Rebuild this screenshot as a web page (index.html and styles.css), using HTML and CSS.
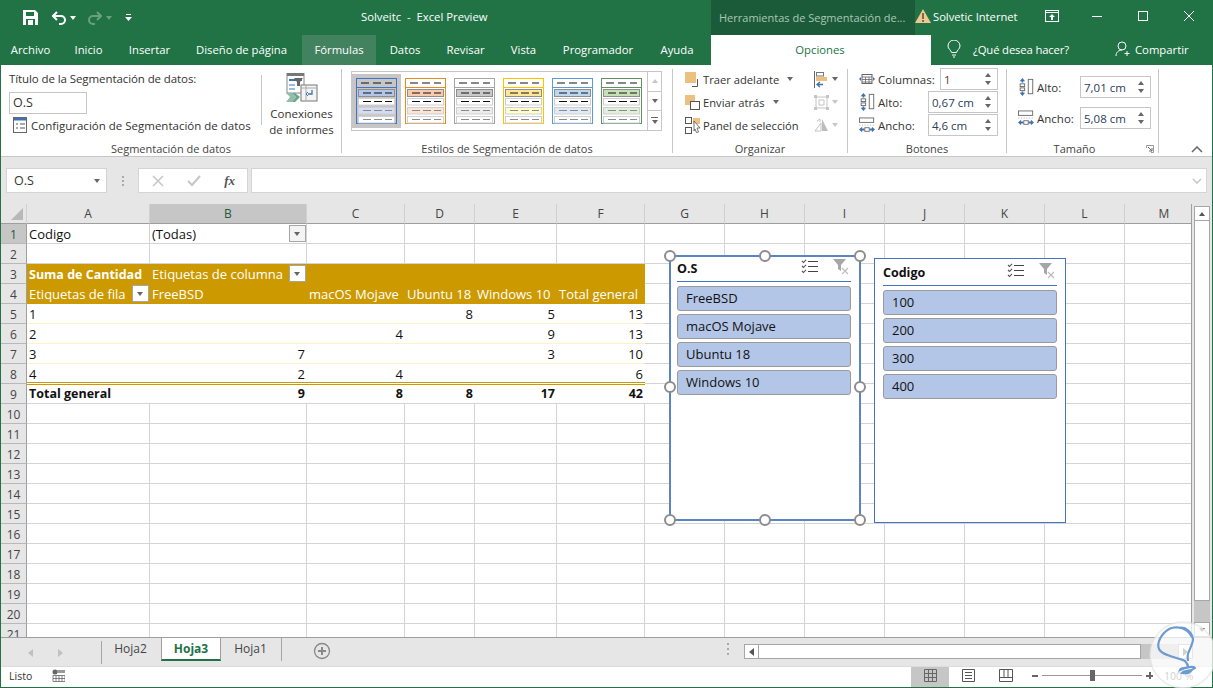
FILE: index.html
```html
<!DOCTYPE html>
<html lang="es">
<head>
<meta charset="utf-8">
<title>Solveitc - Excel Preview</title>
<link rel="stylesheet" href="styles.css">
</head>
<body>
<svg class="defs" width="0" height="0" aria-hidden="true">
  <symbol id="swatch" viewBox="0 0 41 46">
    <rect class="sw-frame" x=".5" y=".5" width="40" height="45"/>
    <path class="sw-frame" d="M0 9.5H41"/>
    <path class="sw-dark" d="M5 5h8M17 5h8M29 5h7"/>
    <rect class="sw-i1" x="2.5" y="11.5" width="36" height="7"/>
    <path class="sw-dark" d="M7 15h8M18 15h8M29 15h7"/>
    <rect class="sw-plain" x="2.5" y="20.5" width="36" height="6.5"/>
    <path class="sw-dark" d="M7 23.5h8M18 23.5h8M29 23.5h7"/>
    <rect class="sw-i2" x="2.5" y="29.5" width="36" height="6.5"/>
    <path class="sw-mid" d="M7 32.5h8M18 32.5h8M29 32.5h7"/>
    <rect class="sw-plain" x="2.5" y="38.5" width="36" height="6.5"/>
    <path class="sw-mid" d="M7 41.5h8M18 41.5h8M29 41.5h7"/>
  </symbol>
  <symbol id="multi" viewBox="0 0 18 16">
    <path d="M7 2.5h10M7 7.5h10M7 12.5h10" fill="none" stroke="#444" stroke-width="1"/>
    <path d="M1 2l1.5 1.5L5 .8M1 7l1.5 1.5L5 5.8M1 12l1.5 1.5L5 10.8" fill="none" stroke="#555" stroke-width="1.1"/>
  </symbol>
  <symbol id="clear" viewBox="0 0 16 16">
    <path d="M0 0h13L8 6v6L5 10V6z" fill="#a6a6a6"/>
    <path d="M9 9l6 6M15 9l-6 6" stroke="#bdbdbd" stroke-width="1.2"/>
  </symbol>
  <symbol id="height" viewBox="0 0 16 20">
    <path d="M4 0l3 3.5H1zM4 20l3-3.5H1z" fill="#3f72af"/>
    <path d="M4 3v2M4 15v2" stroke="#3f72af" stroke-width="2"/>
    <rect x="1.5" y="6.5" width="5" height="3" fill="none" stroke="#666"/>
    <rect x="1.5" y="11" width="5" height="3" fill="none" stroke="#666"/>
    <rect x="10.5" y="1.5" width="5" height="16" fill="#fff" stroke="#666"/>
  </symbol>
  <symbol id="width" viewBox="0 0 18 18">
    <rect x=".5" y=".5" width="16" height="5" fill="#fff" stroke="#666"/>
    <path d="M1 8v1M4 8v1M7 8v1M10 8v1M13 8v1M16 8v1" stroke="#999"/>
    <path d="M0 13.5l3.5-3v6zM18 13.5l-3.5-3v6z" fill="#3f72af"/>
    <path d="M3 13.5h3M12 13.5h3" stroke="#3f72af" stroke-width="2"/>
    <rect x="6.5" y="11.5" width="5" height="4" fill="none" stroke="#666"/>
  </symbol>
</svg>

<div class="app">
  <header class="titlebar">
    <div class="qat">
      <svg class="ic-save" width="15" height="15" viewBox="0 0 15 15"><path d="M0 0h12l3 3v12H0z" fill="#fff"/><rect x="3" y="2" width="8" height="4" fill="#217346"/><rect x="3" y="9" width="9" height="6" fill="#217346"/><rect x="5" y="10" width="5" height="5" fill="#fff"/></svg>
      <svg class="ic-undo" width="15" height="14" viewBox="0 0 15 14"><path d="M5 1L1 5l4 4" fill="none" stroke="#fff" stroke-width="2"/><path d="M1 5h8a4 4 0 0 1 0 8H7" fill="none" stroke="#fff" stroke-width="2"/></svg>
      <i class="caret caret-w"></i>
      <svg class="ic-redo" width="15" height="14" viewBox="0 0 15 14"><path d="M10 1l4 4-4 4" fill="none" stroke="#6a9f80" stroke-width="2"/><path d="M14 5H6a4 4 0 0 0 0 8h2" fill="none" stroke="#6a9f80" stroke-width="2"/></svg>
      <i class="caret caret-dim"></i>
      <svg class="ic-custom" width="7" height="7" viewBox="0 0 7 7"><path d="M1 .5h5" stroke="#fff"/><path d="M0 3h7L3.5 7z" fill="#fff"/></svg>
    </div>
    <div class="doc-title">Solveitc &nbsp;-&nbsp; Excel Preview</div>
    <div class="context-title">Herramientas de Segmentación de...</div>
    <svg class="ic-warn" width="16" height="14" viewBox="0 0 16 14"><path d="M8 0l8 14H0z" fill="#f0c78c"/><path d="M8 4v6M8 11v2" stroke="#444" stroke-width="1.4"/></svg>
    <div class="account">Solvetic Internet</div>
    <svg class="ic-ribbonopts" width="14" height="12" viewBox="0 0 14 12"><rect x=".5" y=".5" width="13" height="11" fill="none" stroke="#fff"/><path d="M0 2.5h14" stroke="#fff"/><path d="M7 4l3 3H8v3H6V7H4z" fill="#fff"/></svg>
    <svg class="ic-win ic-min" width="12" height="12" viewBox="0 0 12 12"><path d="M1 6.5h10" stroke="#fff"/></svg>
    <svg class="ic-win ic-max" width="12" height="12" viewBox="0 0 12 12"><rect x="1.5" y="1.5" width="9" height="9" fill="none" stroke="#fff"/></svg>
    <svg class="ic-win ic-close" width="12" height="12" viewBox="0 0 12 12"><path d="M1 1l10 10M11 1L1 11" stroke="#fff"/></svg>
  </header>

  <nav class="tabs">
    <span class="tab">Archivo</span>
    <span class="tab">Inicio</span>
    <span class="tab">Insertar</span>
    <span class="tab">Diseño de página</span>
    <span class="tab tab-hover">Fórmulas</span>
    <span class="tab">Datos</span>
    <span class="tab">Revisar</span>
    <span class="tab">Vista</span>
    <span class="tab">Programador</span>
    <span class="tab">Ayuda</span>
    <span class="tab tab-active">Opciones</span>
    <div class="tab-extra">
      <svg class="ic-bulb" width="14" height="18" viewBox="0 0 14 18"><path d="M4.5 12.5C4 10 1 9 1 6a6 6 0 0 1 12 0c0 3-3 4-3.500 6.500z M5 15h4M6 17h2" fill="none" stroke="#fff"/></svg>
      <span class="tell">¿Qué desea hacer?</span>
      <svg class="ic-share" width="16" height="16" viewBox="0 0 16 16"><circle cx="7" cy="5" r="4" fill="none" stroke="#fff"/><path d="M1 15c0-4 3-6 6-6M12 10v5M9.500 12.500h5" fill="none" stroke="#fff"/></svg>
      <span class="share">Compartir</span>
    </div>
  </nav>

  <div class="content">
    <section class="ribbon">
      <div class="group g-slicer">
        <div class="group-body g-slicer-body">
          <div class="slicer-title-col">
            <div class="rb-label">Título de la Segmentación de datos:</div>
            <div class="title-input">O.S</div>
            <div class="config-row">
              <svg width="14" height="16" viewBox="0 0 14 16"><rect x=".5" y=".5" width="13" height="15" fill="#fff" stroke="#666"/><rect x="1" y="1" width="12" height="2.500" fill="#3f72af"/><path d="M3 7h2M7 7h5M3 11h2M7 11h5" stroke="#555"/></svg>
              <span>Configuración de Segmentación de datos</span>
            </div>
          </div>
          <div class="inner-sep"></div>
          <div class="connections">
            <svg width="32" height="30" viewBox="0 0 32 30">
              <rect x="1" y="0" width="17" height="20" fill="#fff" stroke="#888"/><rect x="1" y="0" width="17" height="3" fill="#777"/>
              <rect x="3" y="6" width="13" height="2" fill="#3f72af"/><rect x="3" y="11" width="6" height="2" fill="#9cbbe0"/><rect x="3" y="15" width="6" height="2" fill="#9cbbe0"/>
              <path d="M8 5h9l-3 4v4h-3V9z" fill="#666"/>
              <rect x="15" y="12" width="16" height="16" fill="#f4f4f4" stroke="#777"/><path d="M15 15h16M20 12v16" stroke="#aaa"/>
              <path d="M26 17v4h-4" fill="none" stroke="#3f72af" stroke-width="1.300"/><path d="M22 19l-2 2 2 2" fill="none" stroke="#3f72af"/>
              <path d="M0 20h6l4 4-4 5H0l4-5z" fill="#8fbfa8"/><path d="M6 20h3l5 4-5 5H6l4-5z" fill="#6aa58a"/>
            </svg>
            <span class="conn-text">Conexiones<br>de informes</span>
          </div>
        </div>
        <div class="group-label">Segmentación de datos</div>
      </div>

      <div class="group g-styles">
        <div class="group-body g-styles-body">
          <div class="gallery">
            <div class="sw-slot sw-selected"><svg class="sw sw-blue"><use href="#swatch"/></svg></div>
            <div class="sw-slot"><svg class="sw sw-orange"><use href="#swatch"/></svg></div>
            <div class="sw-slot"><svg class="sw sw-gray"><use href="#swatch"/></svg></div>
            <div class="sw-slot"><svg class="sw sw-yellow"><use href="#swatch"/></svg></div>
            <div class="sw-slot"><svg class="sw sw-sky"><use href="#swatch"/></svg></div>
            <div class="sw-slot"><svg class="sw sw-green"><use href="#swatch"/></svg></div>
          </div>
          <div class="gal-scroll">
            <div class="gal-btn gal-up"><i class="tri-up tri-dim"></i></div>
            <div class="gal-btn gal-mid"><i class="caret"></i></div>
            <div class="gal-btn gal-more"><i class="more-bar"></i><i class="caret"></i></div>
          </div>
        </div>
        <div class="group-label">Estilos de Segmentación de datos</div>
      </div>

      <div class="group g-arrange">
        <div class="group-body g-arrange-body">
          <div class="arr-col">
            <div class="arr-row">
              <svg width="15" height="15" viewBox="0 0 15 15"><rect width="11" height="11" fill="#ecc07f"/><path d="M12.500 7v7.500H7" fill="none" stroke="#555"/></svg>
              <span>Traer adelante</span><i class="caret caret-far"></i>
            </div>
            <div class="arr-row">
              <svg width="15" height="15" viewBox="0 0 15 15"><rect width="10" height="10" fill="#ecc07f"/><rect x="5.500" y="6.500" width="9" height="8" fill="#fff" stroke="#555"/></svg>
              <span>Enviar atrás</span><i class="caret caret-far"></i>
            </div>
            <div class="arr-row">
              <svg class="arr-wide" width="16" height="17" viewBox="0 0 16 17"><rect x=".5" y=".5" width="6" height="6" fill="none" stroke="#555"/><rect x=".5" y="10.500" width="6" height="6" fill="none" stroke="#555"/><rect x="8" y="1" width="7" height="6" fill="#ecc07f"/><path d="M9 4l6 7-3 0 1.500 4-2 .5L10 12l-1 2z" fill="#fff" stroke="#555" stroke-width=".8"/></svg>
              <span>Panel de selección</span>
            </div>
          </div>
          <div class="arr-col arr-col-right">
            <div class="arr-row">
              <svg width="15" height="17" viewBox="0 0 15 17"><path d="M.5 0v17" stroke="#666"/><rect x="2.500" y="1.500" width="7" height="3.500" fill="#fff" stroke="#777"/><rect x="2" y="6" width="11" height="4" fill="#ecc07f"/><path d="M9 13.500H3M6 11l-3 2.500L6 16" fill="none" stroke="#3f72af" stroke-width="1.300"/></svg>
              <i class="caret"></i>
            </div>
            <div class="arr-row arr-off">
              <svg width="15" height="15" viewBox="0 0 15 15"><path d="M2 2h11v11H2z M5 5h5v5H5z" fill="none" stroke="#c4c4c4"/><path d="M0 0h3v3H0zM12 0h3v3h-3zM0 12h3v3H0zM12 12h3v3h-3z" fill="#c4c4c4"/></svg>
              <i class="caret caret-dim2"></i>
            </div>
            <div class="arr-row arr-off">
              <svg width="15" height="14" viewBox="0 0 15 14"><path d="M1 13l6-8v8z" fill="none" stroke="#c4c4c4"/><path d="M8 1l6 12H8z" fill="#bdbdbd"/><path d="M3 3l3-2v3" fill="none" stroke="#c4c4c4"/></svg>
              <i class="caret caret-dim2"></i>
            </div>
          </div>
        </div>
        <div class="group-label">Organizar</div>
      </div>

      <div class="group g-buttons">
        <div class="group-body g-buttons-body">
          <div class="size-row">
            <svg class="size-ic" width="16" height="10" viewBox="0 0 16 10"><rect x="3" y=".5" width="10" height="9" fill="#fff" stroke="#666"/><path d="M3 3h10M3 5.500h10M3 8h10M6.500 3v6M10 3v6" stroke="#666" stroke-width=".8"/><path d="M0 5l2-2v4zM16 5l-2-2v4z" fill="#3f72af"/></svg>
            <span class="size-label">Columnas:</span>
            <div class="spin spin-col"><span>1</span><div class="spin-arrows"><i class="tri-up"></i><i class="tri-down"></i></div></div>
          </div>
          <div class="size-row">
            <svg class="size-ic" width="16" height="18"><use href="#height"/></svg>
            <span class="size-label">Alto:</span>
            <div class="spin"><span>0,67 cm</span><div class="spin-arrows"><i class="tri-up"></i><i class="tri-down"></i></div></div>
          </div>
          <div class="size-row">
            <svg class="size-ic" width="16" height="17"><use href="#width"/></svg>
            <span class="size-label">Ancho:</span>
            <div class="spin"><span>4,6 cm</span><div class="spin-arrows"><i class="tri-up"></i><i class="tri-down"></i></div></div>
          </div>
        </div>
        <div class="group-label">Botones</div>
      </div>

      <div class="group g-size">
        <div class="group-body g-size-body">
          <div class="size-row">
            <svg class="size-ic" width="16" height="18"><use href="#height"/></svg>
            <span class="size-label">Alto:</span>
            <div class="spin spin-wide"><span>7,01 cm</span><div class="spin-arrows"><i class="tri-up"></i><i class="tri-down"></i></div></div>
          </div>
          <div class="size-row">
            <svg class="size-ic" width="16" height="17"><use href="#width"/></svg>
            <span class="size-label">Ancho:</span>
            <div class="spin spin-wide"><span>5,08 cm</span><div class="spin-arrows"><i class="tri-up"></i><i class="tri-down"></i></div></div>
          </div>
        </div>
        <div class="group-label size-group-label">Tamaño</div>
        <svg class="launcher" width="8" height="8" viewBox="0 0 8 8"><path d="M.5 3V.5H7.500V7.500H5" fill="none" stroke="#999"/><path d="M2 2l4 4M6 3v3H3" fill="none" stroke="#666"/></svg>
      </div>

      <div class="ribbon-end">
        <svg width="12" height="7" viewBox="0 0 12 7"><path d="M1 6l5-5 5 5" fill="none" stroke="#666" stroke-width="1.500"/></svg>
      </div>
    </section>

    <section class="formula">
      <div class="namebox"><span>O.S</span><i class="caret"></i></div>
      <div class="fx-dots"><i></i><i></i><i></i></div>
      <div class="fx-buttons">
        <svg width="12" height="12" viewBox="0 0 12 12"><path d="M1 1l10 10M11 1L1 11" stroke="#c6c6c6" stroke-width="1.500"/></svg>
        <svg width="14" height="12" viewBox="0 0 14 12"><path d="M1 6l4 4 8-9" fill="none" stroke="#c6c6c6" stroke-width="2"/></svg>
        <span class="fx">fx</span>
      </div>
      <div class="fx-input"><svg width="10" height="6" viewBox="0 0 10 6"><path d="M1 1l4 4 4-4" fill="none" stroke="#c6c6c6" stroke-width="1.500"/></svg></div>
    </section>

    <section class="sheet">
      <div class="grid">
        <table class="cells">
          <colgroup>
            <col class="c-h"><col class="c-a"><col class="c-b"><col class="c-c"><col class="c-d"><col class="c-e"><col class="c-f">
            <col class="c-n"><col class="c-n"><col class="c-n"><col class="c-n"><col class="c-n"><col class="c-n"><col class="c-m">
          </colgroup>
          <tr class="head"><th class="corner"><i></i></th><th>A</th><th class="sel">B</th><th>C</th><th>D</th><th>E</th><th>F</th><th>G</th><th>H</th><th>I</th><th>J</th><th>K</th><th>L</th><th class="col-m">M</th></tr>
          <tr><th class="sel">1</th><td>Codigo</td><td class="has-dd">(Todas)<i class="dd"></i></td><td></td><td></td><td></td><td></td><td></td><td></td><td></td><td></td><td></td><td></td><td></td></tr>
          <tr><th>2</th><td></td><td></td><td></td><td></td><td></td><td></td><td></td><td></td><td></td><td></td><td></td><td></td><td></td></tr>
          <tr class="pv-head"><th>3</th><td class="b">Suma de Cantidad</td><td class="has-dd">Etiquetas de columna<i class="dd"></i></td><td></td><td></td><td></td><td></td><td class="n"></td><td class="n"></td><td class="n"></td><td class="n"></td><td class="n"></td><td class="n"></td><td class="n"></td></tr>
          <tr class="pv-head"><th>4</th><td class="has-dd">Etiquetas de fila<i class="dd"></i></td><td>FreeBSD</td><td>macOS Mojave</td><td>Ubuntu 18</td><td>Windows 10</td><td>Total general</td><td class="n"></td><td class="n"></td><td class="n"></td><td class="n"></td><td class="n"></td><td class="n"></td><td class="n"></td></tr>
          <tr class="pv"><th>5</th><td>1</td><td></td><td></td><td class="r">8</td><td class="r">5</td><td class="r">13</td><td class="n"></td><td class="n"></td><td class="n"></td><td class="n"></td><td class="n"></td><td class="n"></td><td class="n"></td></tr>
          <tr class="pv"><th>6</th><td>2</td><td></td><td class="r">4</td><td></td><td class="r">9</td><td class="r">13</td><td class="n"></td><td class="n"></td><td class="n"></td><td class="n"></td><td class="n"></td><td class="n"></td><td class="n"></td></tr>
          <tr class="pv"><th>7</th><td>3</td><td class="r">7</td><td></td><td></td><td class="r">3</td><td class="r">10</td><td class="n"></td><td class="n"></td><td class="n"></td><td class="n"></td><td class="n"></td><td class="n"></td><td class="n"></td></tr>
          <tr class="pv pv-last"><th>8</th><td>4</td><td class="r">2</td><td class="r">4</td><td></td><td></td><td class="r">6</td><td class="n"></td><td class="n"></td><td class="n"></td><td class="n"></td><td class="n"></td><td class="n"></td><td class="n"></td></tr>
          <tr class="pv pv-total"><th>9</th><td>Total general</td><td class="r">9</td><td class="r">8</td><td class="r">8</td><td class="r">17</td><td class="r">42</td><td class="n"></td><td class="n"></td><td class="n"></td><td class="n"></td><td class="n"></td><td class="n"></td><td class="n"></td></tr>
          <tr><th>10</th><td></td><td></td><td></td><td></td><td></td><td></td><td></td><td></td><td></td><td></td><td></td><td></td><td></td></tr>
          <tr><th>11</th><td></td><td></td><td></td><td></td><td></td><td></td><td></td><td></td><td></td><td></td><td></td><td></td><td></td></tr>
          <tr><th>12</th><td></td><td></td><td></td><td></td><td></td><td></td><td></td><td></td><td></td><td></td><td></td><td></td><td></td></tr>
          <tr><th>13</th><td></td><td></td><td></td><td></td><td></td><td></td><td></td><td></td><td></td><td></td><td></td><td></td><td></td></tr>
          <tr><th>14</th><td></td><td></td><td></td><td></td><td></td><td></td><td></td><td></td><td></td><td></td><td></td><td></td><td></td></tr>
          <tr><th>15</th><td></td><td></td><td></td><td></td><td></td><td></td><td></td><td></td><td></td><td></td><td></td><td></td><td></td></tr>
          <tr><th>16</th><td></td><td></td><td></td><td></td><td></td><td></td><td></td><td></td><td></td><td></td><td></td><td></td><td></td></tr>
          <tr><th>17</th><td></td><td></td><td></td><td></td><td></td><td></td><td></td><td></td><td></td><td></td><td></td><td></td><td></td></tr>
          <tr><th>18</th><td></td><td></td><td></td><td></td><td></td><td></td><td></td><td></td><td></td><td></td><td></td><td></td><td></td></tr>
          <tr><th>19</th><td></td><td></td><td></td><td></td><td></td><td></td><td></td><td></td><td></td><td></td><td></td><td></td><td></td></tr>
          <tr><th>20</th><td></td><td></td><td></td><td></td><td></td><td></td><td></td><td></td><td></td><td></td><td></td><td></td><td></td></tr>
          <tr><th>21</th><td></td><td></td><td></td><td></td><td></td><td></td><td></td><td></td><td></td><td></td><td></td><td></td><td></td></tr>
        </table>

        <div class="slicer slicer-os">
          <div class="slicer-head"><b>O.S</b><svg class="sl-multi" width="18" height="16"><use href="#multi"/></svg><svg class="sl-clear" width="16" height="16"><use href="#clear"/></svg></div>
          <div class="slicer-item">FreeBSD</div>
          <div class="slicer-item">macOS Mojave</div>
          <div class="slicer-item">Ubuntu 18</div>
          <div class="slicer-item">Windows 10</div>
          <i class="h h-tl"></i><i class="h h-tc"></i><i class="h h-tr"></i><i class="h h-ml"></i><i class="h h-mr"></i><i class="h h-bl"></i><i class="h h-bc"></i><i class="h h-br"></i>
        </div>

        <div class="slicer slicer-code">
          <div class="slicer-head"><b>Codigo</b><svg class="sl-multi" width="18" height="16"><use href="#multi"/></svg><svg class="sl-clear" width="16" height="16"><use href="#clear"/></svg></div>
          <div class="slicer-item">100</div>
          <div class="slicer-item">200</div>
          <div class="slicer-item">300</div>
          <div class="slicer-item">400</div>
        </div>
      </div>

      <div class="vscroll">
        <div class="sb-btn"><i class="tri-up tri-dark"></i></div>
        <div class="sb-thumb"></div>
        <div class="sb-track"></div>
        <div class="sb-btn"><i class="tri-down tri-dark"></i></div>
      </div>
    </section>

    <section class="sheetbar">
      <div class="sheet-nav"><i class="nav-l"></i><i class="nav-r"></i></div>
      <div class="sheet-tab sheet-first">Hoja2</div>
      <div class="sheet-tab sheet-on">Hoja3</div>
      <div class="sheet-tab sheet-last">Hoja1</div>
      <svg class="add-sheet" width="18" height="18" viewBox="0 0 18 18"><circle cx="9" cy="9" r="7.500" fill="none" stroke="#888" stroke-width="1.300"/><path d="M9 5v8M5 9h8" stroke="#888" stroke-width="2"/></svg>
      <div class="hdots"><i></i><i></i><i></i></div>
      <div class="hscroll">
        <div class="hs-btn"><i class="nav-l nav-dark"></i></div>
        <div class="hs-thumb"></div>
        <div class="hs-track"></div>
        <div class="hs-btn"><i class="nav-r nav-dark"></i></div>
      </div>
    </section>

    <footer class="status">
      <span class="ready">Listo</span>
      <svg class="macro" width="13" height="13" viewBox="0 0 13 13"><circle cx="3" cy="3" r="2.500" fill="#666"/><rect x="5" y="1" width="8" height="3" fill="#999"/><path d="M1 6.500h12v6H1zM1 9.500h12M4 6.500v6M7 6.500v6M10 6.500v6" fill="none" stroke="#666" stroke-width=".8"/></svg>
      <div class="views">
        <div class="view view-on"><svg width="13" height="13" viewBox="0 0 13 13"><path d="M.5.500h12v12H.5zM.5 4.500h12M.5 8.500h12M4.500.500v12M8.500.500v12" fill="none" stroke="#666"/></svg></div>
        <div class="view"><svg width="13" height="13" viewBox="0 0 13 13"><path d="M.5.500h12v12H.5z" fill="none" stroke="#555"/><path d="M3 3.500h7M3 6.500h7M3 9.500h7" stroke="#555"/></svg></div>
        <div class="view"><svg width="14" height="13" viewBox="0 0 14 13"><path d="M.5.500h13v12H.5zM.5 8.500h13M5 .500v8M9 .500v8" fill="none" stroke="#555"/></svg></div>
      </div>
      <div class="zoom">
        <i class="z-minus"></i>
        <div class="z-track"><i class="z-thumb"></i></div>
        <i class="z-plus"></i>
        <span class="z-val">100 %</span>
      </div>
    </footer>
  </div>

  <svg class="watermark" width="70" height="68" viewBox="0 0 70 68">
    <circle cx="35" cy="35" r="33" fill="#fff" fill-opacity=".72" stroke="#ddd" stroke-opacity=".6" stroke-width="1.500"/>
    <path d="M44 17C38 6 24 4 16 13C9 21 8 29 15 33C22 37 31 38 37 41C39 43 40 44 40 47C38 49 33 47 32 50C38 47 46 46 47 48C42 52 36 50 34 53C40 54 42 52 44 50" fill="none" stroke="#6b9bd1" stroke-width="2.200"/>
    <path d="M31 8C38 6 44 13 45 19C45 24 41 30 40 34C39 37 40 39 40 41" fill="none" stroke="#6b9bd1" stroke-width="2.200"/>
  </svg>
</div>
</body>
</html>
```
FILE: styles.css
```css
* { box-sizing: border-box; }
html, body { margin: 0; padding: 0; }
body { font-family: "Open Sans", "Noto Sans", sans-serif; font-size: 11.5px; color: #333; overflow: hidden; }
i { display: block; font-style: normal; }
.defs { position: absolute; }

.app { position: relative; width: 1213px; height: 688px; background: #217346; overflow: hidden; display: flex; flex-direction: column; }

/* title bar */
.titlebar { height: 35px; display: flex; align-items: center; color: #fff; flex: none; }
.qat { width: 361px; display: flex; align-items: center; padding-left: 23px; }
.ic-undo { margin-left: 14px; }
.caret { width: 0; height: 0; border-left: 3.5px solid transparent; border-right: 3.5px solid transparent; border-top: 4px solid #666; }
.caret-w { border-top-color: #fff; margin-left: 3px; }
.ic-redo { margin-left: 11px; }
.caret-dim { border-top-color: #6a9f80; margin-left: 4px; }
.ic-custom { margin-left: 13px; }
.doc-title { width: 350px; margin-top: -2px; font-size: 11.3px; }
.context-title { width: 204px; height: 35px; line-height: 36px; background: #1b5b3a; color: #a9c8b6; padding-left: 8px; white-space: nowrap; overflow: hidden; font-size: 11px; }
.ic-warn { margin-top: -4px; }
.account { margin: -2px 0 0 2px; width: 112px; font-size: 11.2px; }
.ic-ribbonopts { flex: none; margin-top: -4px; }
.ic-win { flex: none; margin-top: -4px; }
.ic-min { margin-left: 32px; }
.ic-max { margin-left: 34px; }
.ic-close { margin-left: 34px; }

/* tab strip */
.tabs { height: 30px; flex: none; display: grid; grid-template-columns: 61px 55px 67px 117px 76px 58px 63px 53px 96px 62px 223px 282px; color: #fff; font-size: 11.3px; }
.tab { display: flex; align-items: center; justify-content: center; white-space: nowrap; padding-bottom: 2px; }
.tab-hover { background: #43825f; margin-left: 2px; }
.tab-active { background: #fff; color: #217346; margin-left: 3px; padding-right: 2px; }
.tab-extra { display: flex; align-items: center; padding: 0 0 2px 16px; }
.tell { margin-left: 12px; width: 142px; white-space: nowrap; letter-spacing: -.15px; }
.share { margin-left: 4px; }

/* content area */
.content { flex: 1; min-height: 0; margin: 0 1px 1px; background: #e6e6e6; display: flex; flex-direction: column; }

/* ribbon */
.ribbon { height: 92px; flex: none; background: #fff; border-bottom: 1px solid #c6c6c6; padding: 4px 0 3px; display: flex; }
.group { position: relative; display: flex; flex-direction: column; border-right: 1px solid #c6c6c6; flex: none; }
.group-body { height: 74px; flex: none; display: flex; }
.group-label { height: 10px; line-height: 12px; text-align: center; white-space: nowrap; font-size: 11px; color: #444; }
.size-group-label { padding-right: 16px; }
.g-slicer { width: 341px; }
.g-styles { width: 331px; }
.g-arrange { width: 175px; }
.g-buttons { width: 159px; }
.g-size { width: 152px; }
.ribbon-end { flex: 1; display: flex; align-items: flex-end; justify-content: flex-end; padding: 0 9px 0 0; }

.slicer-title-col { width: 260px; padding: 2px 0 0 8px; }
.rb-label { height: 16px; line-height: 16px; white-space: nowrap; letter-spacing: -.09px; }
.title-input { width: 78px; height: 22px; margin-top: 5px; border: 1px solid #c6c6c6; line-height: 19px; padding-left: 3px; font-size: 12.5px; }
.config-row { display: flex; align-items: center; gap: 4px; height: 18px; margin: 2px 0 0 4px; white-space: nowrap; }
.inner-sep { width: 1px; height: 50px; margin-top: 6px; background: #c6c6c6; flex: none; }
.connections { flex: 1; display: flex; flex-direction: column; align-items: center; padding-top: 4px; }
.conn-text { text-align: center; line-height: 16px; margin-top: 3px; white-space: nowrap; }

.g-styles-body { padding: 2px 0 0 9px; }
.gallery { width: 297px; height: 60px; border: 1px solid #c6c6c6; display: flex; align-items: flex-start; }
.sw-slot { width: 49px; height: 54px; margin-top: 2px; padding: 4px 4px 0; flex: none; }
.sw-selected { background: #c6c6c6; }
.sw { display: block; width: 41px; height: 46px; }
.sw-frame { fill: none; stroke: var(--c); }
.sw-plain { fill: #fff; stroke: #cfcfcf; }
.sw-i1 { fill: var(--a); stroke: #8e8e8e; }
.sw-i2 { fill: var(--b); stroke: #cfcfcf; }
.sw-dark { fill: none; stroke: #111; }
.sw-mid { fill: none; stroke: #8a8a8a; }
.sw-blue { --c: #4472c4; --a: #b4c6e7; --b: #d4dcf4; }
.sw-orange { --c: #e08e24; --a: #f8cbad; --b: #fbe5d6; }
.sw-gray { --c: #a5a5a5; --a: #c9c9c9; --b: #ededed; }
.sw-yellow { --c: #ffc000; --a: #ffe699; --b: #ffffcc; }
.sw-sky { --c: #5b9bd5; --a: #bdd7ee; --b: #deebf7; }
.sw-green { --c: #5f9162; --a: #c5e0b4; --b: #e2f0d9; }
.gal-scroll { width: 14px; height: 60px; display: flex; flex-direction: column; }
.gal-btn { flex: 1; border: 1px solid #c6c6c6; border-left: 0; display: flex; flex-direction: column; align-items: center; justify-content: center; gap: 2px; }
.gal-btn + .gal-btn { border-top: 0; }
.more-bar { width: 7px; height: 1px; background: #666; }
.tri-up { width: 0; height: 0; border-left: 3.5px solid transparent; border-right: 3.5px solid transparent; border-bottom: 4px solid #666; }
.tri-down { width: 0; height: 0; border-left: 3.5px solid transparent; border-right: 3.5px solid transparent; border-top: 4px solid #666; }
.tri-dim { border-bottom-color: #c6c6c6; }

.g-arrange-body { gap: 0; font-size: 11.2px; }
.arr-col { width: 141px; padding-left: 12px; display: flex; flex-direction: column; gap: 3px; flex: none; }
.arr-col-right { width: auto; padding-left: 0; }
.arr-row { height: 20px; display: flex; align-items: center; gap: 3px; white-space: nowrap; }
.arr-row svg { flex: none; }
.arr-row .arr-wide { margin-right: -1px; }
.caret-far { margin-left: 5px; }
.caret-dim2 { border-top-color: #c6c6c6; }

.g-buttons-body { flex-direction: column; gap: 1px; margin-top: -1px; height: 75px; padding: 0 8px 0 11px; }
.size-row { display: flex; align-items: center; height: 22px; }
.size-ic { flex: none; margin-right: 3px; }
.size-label { flex: 1; white-space: nowrap; }
.spin { width: 70px; height: 22px; border: 1px solid #c6c6c6; padding: 0 6px 0 3px; display: flex; align-items: center; justify-content: space-between; color: #2b4058; flex: none; }
.spin-col { width: 58px; color: #6a3a30; }
.spin-wide { width: 71px; }
.spin-arrows { display: flex; flex-direction: column; gap: 4px; }
.spin-arrows i { border-left-width: 3px; border-right-width: 3px; }
.g-size-body { flex-direction: column; gap: 9px; padding: 7px 7px 0 11px; }
.g-size-body .size-row { height: 22px; }
.launcher { position: absolute; right: 4px; bottom: 0; }

/* formula bar */
.formula { height: 47px; flex: none; display: flex; align-items: center; padding: 0 5px; }
.namebox { width: 101px; height: 25px; background: #fff; border: 1px solid #d4d4d4; display: flex; align-items: center; justify-content: space-between; padding: 0 6px 0 7px; font-size: 12.5px; }
.fx-dots { width: 31px; display: flex; flex-direction: column; align-items: center; gap: 2px; }
.fx-dots i { width: 2px; height: 2px; background: #aaa; }
.fx-buttons { width: 110px; height: 25px; background: #fff; border: 1px solid #d4d4d4; display: flex; align-items: center; justify-content: space-between; padding: 0 12px 0 13px; }
.fx { font: italic bold 13px "Liberation Serif", serif; color: #555; }
.fx-input { flex: 1; height: 25px; margin-left: 3px; background: #fff; border: 1px solid #d4d4d4; display: flex; align-items: center; justify-content: flex-end; padding-right: 4px; }

/* sheet */
.sheet { height: 433px; flex: none; display: flex; }
.grid { position: relative; width: 1191px; overflow: hidden; flex: none; border-right: 1px solid #9e9e9e; border-bottom: 0; }
.cells { border-collapse: separate; border-spacing: 0; table-layout: fixed; width: 1191px; font-size: 13px; color: #111; background: #fff; }
.c-h { width: 26px; } .c-a { width: 123px; } .c-b { width: 157px; } .c-c { width: 98px; } .c-d { width: 70px; } .c-e { width: 82px; } .c-f { width: 88px; } .c-n { width: 80px; } .c-m { width: 67px; }
.cells tr { height: 20px; }
.cells th { height: 20px; padding: 1px 0 0; background: #e6e6e6; font-weight: 400; font-size: 12px; line-height: 17px; color: #444; text-align: center; border-right: 1px solid #9e9e9e; border-bottom: 1px solid #b8b8b8; }
.cells .head th { padding-top: 0; background: #e6e6e6; border-right: 1px solid #d0d0d0; border-bottom: 1px solid #9e9e9e; }
.cells th.sel, .cells .head th.sel { background: #c6c6c6; color: #215a3c; }
.cells .head th.col-m { padding-left: 12px; }
.corner { position: relative; }
.corner i { position: absolute; right: 3px; bottom: 3px; width: 0; height: 0; border-left: 12px solid transparent; border-bottom: 12px solid #b8b8b8; }
.cells td { height: 20px; padding: 1px 2px 0; border-right: 1px solid #d4d4d4; border-bottom: 1px solid #d4d4d4; white-space: nowrap; overflow: hidden; line-height: 18px; }
.cells td.has-dd { position: relative; overflow: visible; }
.dd { position: absolute; right: 0; top: 1px; width: 17px; height: 17px; background: #f4f4f4; border: 1px solid #a6a6a6; }
.dd::after { content: ""; position: absolute; left: 4px; top: 6px; border-left: 3.5px solid transparent; border-right: 3.5px solid transparent; border-top: 4px solid #666; }
.pv-head td { background: #cc9900; color: #fff; border-right: 0; border-bottom: 0; padding-top: 0; line-height: 19px; }
.pv-head td.n { background: #fff; border-right: 1px solid #d4d4d4; border-bottom: 1px solid #d4d4d4; }
.pv-head td.b { font-weight: 700; font-size: 12.5px; }
.pv-head .dd { right: 1px; background: #fff; }
.pv td { border-right: 0; border-bottom: 1px solid #fff3c4; }
.pv td.n { border-right: 1px solid #d4d4d4; border-bottom: 1px solid #d4d4d4; }
.pv-last td { border-bottom: 1px solid #fff; line-height: 18px; background: linear-gradient(#cc9900, #cc9900) left bottom / 100% 1px no-repeat; }
.pv-last td.n { background: none; }
.pv-total td { font-weight: 700; font-size: 12.5px; padding-top: 0; border-bottom: 1px solid #d4d4d4; background: linear-gradient(#cc9900, #cc9900) left top / 100% 1px no-repeat; }
.pv-total td.n { background: none; }
td.r { text-align: right; }

/* slicers */
.slicer { position: absolute; width: 192px; height: 265px; background: #fff; border: 1px solid #4472c4; padding: 0 8px; }
.slicer-os { left: 668px; top: 51px; height: 266px; border: 2px solid #5a84c8; padding: 0 8px 0 6px; }
.slicer-code { left: 873px; top: 54px; }
.slicer-head { height: 27px; border-bottom: 1px solid #4472c4; display: flex; align-items: center; margin-bottom: 4px; font-size: 12.5px; color: #111; }
.slicer-os .slicer-head { height: 25px; padding-bottom: 2px; }
.slicer-head b { flex: 1; }
.sl-clear { margin: -3px 2px 0 14px; }
.sl-multi { margin-top: -3px; }
.slicer-item { height: 25px; margin-bottom: 3px; background: #b4c6e7; border: 1px solid #9a9a9a; border-radius: 3px; font-size: 13px; line-height: 23px; padding-left: 8px; color: #111; white-space: nowrap; }
.h { position: absolute; width: 12px; height: 12px; background: #fff; border: 2px solid #8c8c8c; border-radius: 50%; }
.h-tl { left: -7px; top: -7px; } .h-tc { left: 88px; top: -7px; } .h-tr { right: -7px; top: -7px; }
.h-ml { left: -7px; top: 124px; } .h-mr { right: -7px; top: 124px; }
.h-bl { left: -7px; bottom: -7px; } .h-bc { left: 88px; bottom: -7px; } .h-br { right: -7px; bottom: -7px; }

.vscroll { width: 16px; margin: 2px 0 0 2px; display: flex; flex-direction: column; flex: none; }
.sb-btn { height: 15px; flex: none; background: #fff; border: 1px solid #a6a6a6; display: flex; align-items: center; justify-content: center; }
.sb-thumb { height: 380px; flex: none; background: #fff; border: 1px solid #a6a6a6; border-top: 0; }
.sb-track { flex: 1; background: #c6c6c6; }
.tri-dark { border-bottom-color: #555; border-top-color: #555; }

/* sheet tabs */
.sheetbar { height: 29px; flex: none; border-top: 1px solid #9e9e9e; display: flex; align-items: flex-start; }
.sheet-nav { width: 101px; height: 23px; display: flex; align-items: center; gap: 25px; padding-left: 27px; border-right: 1px solid #a6a6a6; margin-top: 3px; }
.nav-l { width: 0; height: 0; border-top: 4px solid transparent; border-bottom: 4px solid transparent; border-right: 5px solid #c0c0c0; }
.nav-r { width: 0; height: 0; border-top: 4px solid transparent; border-bottom: 4px solid transparent; border-left: 5px solid #c0c0c0; }
.nav-dark { border-right-color: #555; border-left-color: #555; }
.sheet-tab { width: 60px; height: 23px; text-align: center; line-height: 22px; font-size: 12px; color: #444; }
.sheet-first { width: 59px; padding-right: 2px; }
.sheet-on { background: #fff; color: #217346; font-weight: 700; border-bottom: 2px solid #217346; border-left: 1px solid #9e9e9e; border-right: 1px solid #9e9e9e; }
.sheet-last { width: 61px; padding-right: 1px; border-right: 1px solid #a6a6a6; }
.add-sheet { margin: 4px 0 0 31px; flex: none; }
.hdots { width: 2px; margin: 5px 0 0 396px; display: flex; flex-direction: column; gap: 3px; flex: none; }
.hdots i { width: 2px; height: 2px; background: #aaa; }
.hscroll { margin: 6px 0 0 15px; width: 449px; height: 15px; display: flex; flex: none; }
.hs-btn { width: 15px; height: 15px; background: #fff; border: 1px solid #a6a6a6; display: flex; align-items: center; justify-content: center; flex: none; }
.hs-thumb { width: 382px; background: #fff; border: 1px solid #a6a6a6; border-left: 0; flex: none; }
.hs-track { flex: 1; background: #c6c6c6; }

/* status bar */
.status { flex: 1; min-height: 0; background: #fff; border-top: 1px solid #dcdcdc; display: flex; align-items: center; font-size: 10.5px; }
.ready { margin: -3px 0 0 8px; width: 43px; }
.macro { flex: none; margin-top: -3px; }
.views { display: flex; margin-left: 846px; height: 100%; }
.view { width: 38px; display: flex; align-items: center; justify-content: center; padding-bottom: 3px; }
.view-on { background: #c6c6c6; }
.zoom { display: flex; align-items: center; margin: -3px 0 0 7px; }
.z-minus { width: 6px; height: 2px; background: #666; }
.z-track { position: relative; width: 100px; height: 1px; background: #999; margin: 0 4px; }
.z-thumb { position: absolute; left: 48px; top: -5px; width: 5px; height: 11px; background: #666; }
.z-plus { width: 7px; height: 7px; background: linear-gradient(#666,#666) center/7px 2px no-repeat, linear-gradient(#666,#666) center/2px 7px no-repeat; }
.z-val { margin-left: 11px; color: #555; }

.watermark { position: absolute; left: 1148px; top: 620px; }
```
